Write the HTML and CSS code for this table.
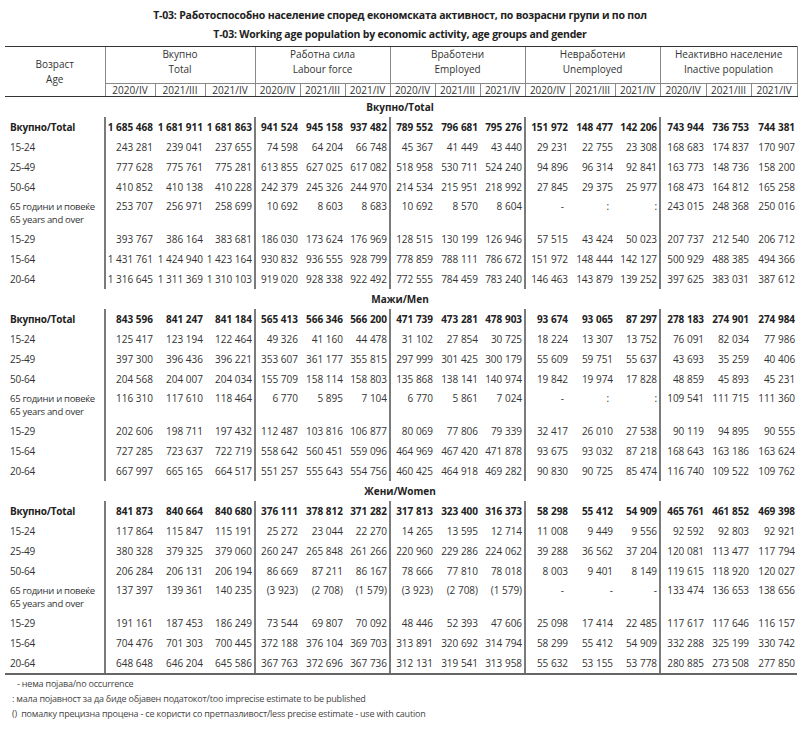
FILE: index.html
```html
<!DOCTYPE html>
<html lang="mk">
<head>
<meta charset="utf-8">
<title>T-03: Работоспособно население</title>
<link rel="stylesheet" href="styles.css">
</head>
<body>
<div class="page">
<h1 class="title">T-03: Работоспособно население според економската активност, по возрасни групи и по пол</h1>
<h2 class="title">T-03: Working age population by economic activity, age groups and gender</h2>
<table class="data">
<colgroup>
<col class="c-age"><col class="c-wide"><col class="c-wide"><col class="c-wide">
<col class="c-n"><col class="c-n"><col class="c-n">
<col class="c-n"><col class="c-n"><col class="c-n">
<col class="c-n"><col class="c-n"><col class="c-n">
<col class="c-l"><col class="c-n"><col class="c-l">
</colgroup>
<thead>
<tr class="groups">
<th rowspan="2" class="age">Возраст<br>Age</th>
<th colspan="3" class="grp">Вкупно<br>Total</th>
<th colspan="3" class="grp">Работна сила<br>Labour force</th>
<th colspan="3" class="grp">Вработени<br>Employed</th>
<th colspan="3" class="grp">Невработени<br>Unemployed</th>
<th colspan="3" class="grp last">Неактивно население<br>Inactive population</th>
</tr>
<tr class="years">
<th>2020/IV</th><th>2021/III</th><th>2021/IV</th>
<th>2020/IV</th><th>2021/III</th><th>2021/IV</th>
<th>2020/IV</th><th>2021/III</th><th>2021/IV</th>
<th>2020/IV</th><th>2021/III</th><th>2021/IV</th>
<th>2020/IV</th><th>2021/III</th><th>2021/IV</th>
</tr>
</thead>
<tbody>
<tr class="section"><td colspan="16">Вкупно/Total</td></tr>
<tr class="total"><td class="lbl">Вкупно/Total</td><td class="g">1 685 468</td><td>1 681 911</td><td>1 681 863</td><td class="g">941 524</td><td>945 158</td><td>937 482</td><td class="g">789 552</td><td>796 681</td><td>795 276</td><td class="g">151 972</td><td>148 477</td><td>142 206</td><td class="g">743 944</td><td>736 753</td><td>744 381</td></tr>
<tr><td class="lbl">15-24</td><td class="g">243 281</td><td>239 041</td><td>237 655</td><td class="g">74 598</td><td>64 204</td><td>66 748</td><td class="g">45 367</td><td>41 449</td><td>43 440</td><td class="g">29 231</td><td>22 755</td><td>23 308</td><td class="g">168 683</td><td>174 837</td><td>170 907</td></tr>
<tr><td class="lbl">25-49</td><td class="g">777 628</td><td>775 761</td><td>775 281</td><td class="g">613 855</td><td>627 025</td><td>617 082</td><td class="g">518 958</td><td>530 711</td><td>524 240</td><td class="g">94 896</td><td>96 314</td><td>92 841</td><td class="g">163 773</td><td>148 736</td><td>158 200</td></tr>
<tr><td class="lbl">50-64</td><td class="g">410 852</td><td>410 138</td><td>410 228</td><td class="g">242 379</td><td>245 326</td><td>244 970</td><td class="g">214 534</td><td>215 951</td><td>218 992</td><td class="g">27 845</td><td>29 375</td><td>25 977</td><td class="g">168 473</td><td>164 812</td><td>165 258</td></tr>
<tr class="two"><td class="lbl">65 години и повеќе<br>65 years and over</td><td class="g">253 707</td><td>256 971</td><td>258 699</td><td class="g">10 692</td><td>8 603</td><td>8 683</td><td class="g">10 692</td><td>8 570</td><td>8 604</td><td class="g sym">-</td><td class="sym">:</td><td>:</td><td class="g">243 015</td><td>248 368</td><td>250 016</td></tr>
<tr><td class="lbl">15-29</td><td class="g">393 767</td><td>386 164</td><td>383 681</td><td class="g">186 030</td><td>173 624</td><td>176 969</td><td class="g">128 515</td><td>130 199</td><td>126 946</td><td class="g">57 515</td><td>43 424</td><td>50 023</td><td class="g">207 737</td><td>212 540</td><td>206 712</td></tr>
<tr><td class="lbl">15-64</td><td class="g">1 431 761</td><td>1 424 940</td><td>1 423 164</td><td class="g">930 832</td><td>936 555</td><td>928 799</td><td class="g">778 859</td><td>788 111</td><td>786 672</td><td class="g">151 972</td><td>148 444</td><td>142 127</td><td class="g">500 929</td><td>488 385</td><td>494 366</td></tr>
<tr><td class="lbl">20-64</td><td class="g">1 316 645</td><td>1 311 369</td><td>1 310 103</td><td class="g">919 020</td><td>928 338</td><td>922 492</td><td class="g">772 555</td><td>784 459</td><td>783 240</td><td class="g">146 463</td><td>143 879</td><td>139 252</td><td class="g">397 625</td><td>383 031</td><td>387 612</td></tr>

<tr class="section"><td colspan="16">Мажи/Men</td></tr>
<tr class="total"><td class="lbl">Вкупно/Total</td><td class="g">843 596</td><td>841 247</td><td>841 184</td><td class="g">565 413</td><td>566 346</td><td>566 200</td><td class="g">471 739</td><td>473 281</td><td>478 903</td><td class="g">93 674</td><td>93 065</td><td>87 297</td><td class="g">278 183</td><td>274 901</td><td>274 984</td></tr>
<tr><td class="lbl">15-24</td><td class="g">125 417</td><td>123 194</td><td>122 464</td><td class="g">49 326</td><td>41 160</td><td>44 478</td><td class="g">31 102</td><td>27 854</td><td>30 725</td><td class="g">18 224</td><td>13 307</td><td>13 752</td><td class="g">76 091</td><td>82 034</td><td>77 986</td></tr>
<tr><td class="lbl">25-49</td><td class="g">397 300</td><td>396 436</td><td>396 221</td><td class="g">353 607</td><td>361 177</td><td>355 815</td><td class="g">297 999</td><td>301 425</td><td>300 179</td><td class="g">55 609</td><td>59 751</td><td>55 637</td><td class="g">43 693</td><td>35 259</td><td>40 406</td></tr>
<tr><td class="lbl">50-64</td><td class="g">204 568</td><td>204 007</td><td>204 034</td><td class="g">155 709</td><td>158 114</td><td>158 803</td><td class="g">135 868</td><td>138 141</td><td>140 974</td><td class="g">19 842</td><td>19 974</td><td>17 828</td><td class="g">48 859</td><td>45 893</td><td>45 231</td></tr>
<tr class="two"><td class="lbl">65 години и повеќе<br>65 years and over</td><td class="g">116 310</td><td>117 610</td><td>118 464</td><td class="g">6 770</td><td>5 895</td><td>7 104</td><td class="g">6 770</td><td>5 861</td><td>7 024</td><td class="g sym">-</td><td class="sym">:</td><td>:</td><td class="g">109 541</td><td>111 715</td><td>111 360</td></tr>
<tr><td class="lbl">15-29</td><td class="g">202 606</td><td>198 711</td><td>197 432</td><td class="g">112 487</td><td>103 816</td><td>106 877</td><td class="g">80 069</td><td>77 806</td><td>79 339</td><td class="g">32 417</td><td>26 010</td><td>27 538</td><td class="g">90 119</td><td>94 895</td><td>90 555</td></tr>
<tr><td class="lbl">15-64</td><td class="g">727 285</td><td>723 637</td><td>722 719</td><td class="g">558 642</td><td>560 451</td><td>559 096</td><td class="g">464 969</td><td>467 420</td><td>471 878</td><td class="g">93 675</td><td>93 032</td><td>87 218</td><td class="g">168 643</td><td>163 186</td><td>163 624</td></tr>
<tr><td class="lbl">20-64</td><td class="g">667 997</td><td>665 165</td><td>664 517</td><td class="g">551 257</td><td>555 643</td><td>554 756</td><td class="g">460 425</td><td>464 918</td><td>469 282</td><td class="g">90 830</td><td>90 725</td><td>85 474</td><td class="g">116 740</td><td>109 522</td><td>109 762</td></tr>

<tr class="section"><td colspan="16">Жени/Women</td></tr>
<tr class="total"><td class="lbl">Вкупно/Total</td><td class="g">841 873</td><td>840 664</td><td>840 680</td><td class="g">376 111</td><td>378 812</td><td>371 282</td><td class="g">317 813</td><td>323 400</td><td>316 373</td><td class="g">58 298</td><td>55 412</td><td>54 909</td><td class="g">465 761</td><td>461 852</td><td>469 398</td></tr>
<tr><td class="lbl">15-24</td><td class="g">117 864</td><td>115 847</td><td>115 191</td><td class="g">25 272</td><td>23 044</td><td>22 270</td><td class="g">14 265</td><td>13 595</td><td>12 714</td><td class="g">11 008</td><td>9 449</td><td>9 556</td><td class="g">92 592</td><td>92 803</td><td>92 921</td></tr>
<tr><td class="lbl">25-49</td><td class="g">380 328</td><td>379 325</td><td>379 060</td><td class="g">260 247</td><td>265 848</td><td>261 266</td><td class="g">220 960</td><td>229 286</td><td>224 062</td><td class="g">39 288</td><td>36 562</td><td>37 204</td><td class="g">120 081</td><td>113 477</td><td>117 794</td></tr>
<tr><td class="lbl">50-64</td><td class="g">206 284</td><td>206 131</td><td>206 194</td><td class="g">86 669</td><td>87 211</td><td>86 167</td><td class="g">78 666</td><td>77 810</td><td>78 018</td><td class="g">8 003</td><td>9 401</td><td>8 149</td><td class="g">119 615</td><td>118 920</td><td>120 027</td></tr>
<tr class="two"><td class="lbl">65 години и повеќе<br>65 years and over</td><td class="g">137 397</td><td>139 361</td><td>140 235</td><td class="g">(3 923)</td><td>(2 708)</td><td>(1 579)</td><td class="g">(3 923)</td><td>(2 708)</td><td>(1 579)</td><td class="g sym">-</td><td>-</td><td>-</td><td class="g">133 474</td><td>136 653</td><td>138 656</td></tr>
<tr><td class="lbl">15-29</td><td class="g">191 161</td><td>187 453</td><td>186 249</td><td class="g">73 544</td><td>69 807</td><td>70 092</td><td class="g">48 446</td><td>52 393</td><td>47 606</td><td class="g">25 098</td><td>17 414</td><td>22 485</td><td class="g">117 617</td><td>117 646</td><td>116 157</td></tr>
<tr><td class="lbl">15-64</td><td class="g">704 476</td><td>701 303</td><td>700 445</td><td class="g">372 188</td><td>376 104</td><td>369 703</td><td class="g">313 891</td><td>320 692</td><td>314 794</td><td class="g">58 299</td><td>55 412</td><td>54 909</td><td class="g">332 288</td><td>325 199</td><td>330 742</td></tr>
<tr class="end"><td class="lbl">20-64</td><td class="g">648 648</td><td>646 204</td><td>645 586</td><td class="g">367 763</td><td>372 696</td><td>367 736</td><td class="g">312 131</td><td>319 541</td><td>313 958</td><td class="g">55 632</td><td>53 155</td><td>53 778</td><td class="g">280 885</td><td>273 508</td><td>277 850</td></tr>
</tbody>
</table>
<div class="notes">
<p class="n1">- нема појава/no occurrence</p>
<p>: мала појавност за да биде објавен податокот/too imprecise estimate to be published</p>
<p>()&nbsp; помалку прецизна процена - се користи со претпазливост/less precise estimate - use with caution</p>
</div>
</div>
</body>
</html>
```

FILE: styles.css
```css
* {
  box-sizing: border-box;
}

body {
  margin: 0;
  background: #ffffff;
  color: #333333;
  font-family: "Open Sans", "Noto Sans", sans-serif;
  font-size: 10px;
}

.page {
  width: 800px;
  padding-top: 6px;
}

.title {
  margin: 0;
  font-size: 10.5px;
  font-weight: 700;
  line-height: 19px;
  letter-spacing: -0.2px;
  text-align: center;
  color: #222222;
}

.data {
  margin: 2px 0 0 5px;
  width: 792px;
  border-collapse: collapse;
  table-layout: fixed;
}

.c-age { width: 100px; }
.c-wide { width: 50px; }
.c-n { width: 45px; }
.c-l { width: 46px; }

.data th {
  font-weight: 400;
  padding: 0;
  color: #333333;
}

.groups th {
  border-top: 1px solid #333333;
}

.age {
  text-align: center;
  vertical-align: middle;
  line-height: 15px;
  padding-top: 5px;
  border-bottom: 1px solid #333333;
}

.grp {
  border-left: 1px solid #888888;
  border-bottom: 1px solid #888888;
  line-height: 15px;
  padding: 1px 0 6px;
  vertical-align: top;
  height: 37px;
}

.grp.last {
  border-right: 1px solid #888888;
}

.years th {
  border-left: 1px solid #888888;
  border-right: 1px solid #888888;
  border-bottom: 1px solid #333333;
  line-height: 12px;
  height: 13px;
  white-space: nowrap;
}

.data td {
  padding: 4px 2px 4px 0;
  line-height: 12px;
  text-align: right;
  white-space: nowrap;
  vertical-align: top;
}

.data .two td {
  padding-top: 3px;
  padding-bottom: 3px;
  line-height: 13px;
}

.data td.lbl {
  text-align: left;
  padding-left: 5px;
  letter-spacing: -0.2px;
}

.data .two td.lbl {
  font-size: 9.5px;
  letter-spacing: -0.3px;
}

.data td.g {
  border-left: 2px solid #7a7a7a;
}

.data td.sym {
  padding-right: 6px;
}

.section td {
  text-align: center;
  font-weight: 700;
  color: #222222;
}

.data .section td {
  text-align: center;
  height: 20px;
}

.total td {
  font-weight: 700;
  color: #222222;
}

.end td {
  border-bottom: 2px solid #666666;
}

.notes {
  padding: 1px 0 0 12px;
  font-size: 9px;
  line-height: 15px;
  letter-spacing: -0.2px;
  color: #444444;
}

.notes p {
  margin: 0;
}

.notes .n1 {
  padding-left: 5px;
}
```
